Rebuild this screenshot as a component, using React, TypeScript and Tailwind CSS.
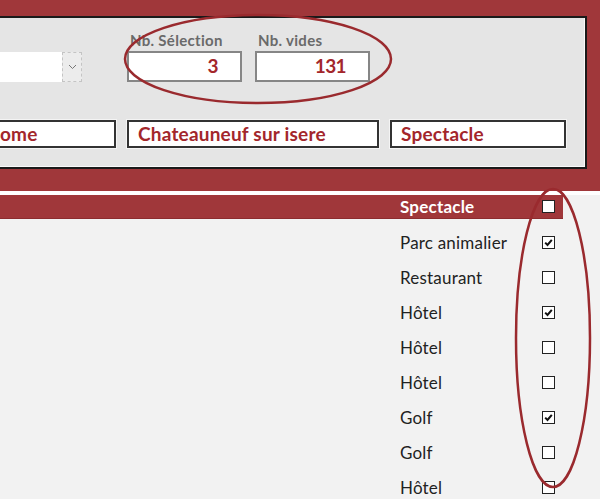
import React from "react";

const ROWS = [
  { label: "Parc animalier", checked: true },
  { label: "Restaurant", checked: false },
  { label: "Hôtel", checked: true },
  { label: "Hôtel", checked: false },
  { label: "Hôtel", checked: false },
  { label: "Golf", checked: true },
  { label: "Golf", checked: false },
  { label: "Hôtel", checked: false },
];

function Check({ checked }: { checked: boolean }) {
  return (
    <div className="w-[13px] h-[13px] shrink-0 border border-[#222] bg-white flex items-center justify-center">
      {checked && (
        <svg width="9" height="9" viewBox="0 0 9 9">
          <path d="M1.2 4.6 L3.5 7 L7.8 1.8" fill="none" stroke="#111" strokeWidth="2" />
        </svg>
      )}
    </div>
  );
}

function ValueBox({ label, value }: { label: string; value: string }) {
  return (
    <div className="flex flex-col w-[115px]">
      <span className="pl-[3px] text-[15px] leading-[16px] tracking-[0.3px] font-bold text-[#6a6a6a]">{label}</span>
      <div className="mt-[3px] h-[31px] bg-white border-2 border-[#868686] flex items-center justify-end pr-[22px] text-[19px] tracking-[-0.6px] font-bold text-[#a3262b]">
        {value}
      </div>
    </div>
  );
}

function TextBox({ text, className }: { text: string; className: string }) {
  return (
    <div
      className={
        "h-[28px] bg-white border-2 border-[#333] shadow-[0_0_0_1px_#f4f4f4] flex items-center text-[19px] tracking-[0.2px] font-bold text-[#a3262b] whitespace-nowrap overflow-hidden " +
        className
      }
    >
      {text}
    </div>
  );
}

export default function App() {
  return (
    <div
      className="relative w-[600px] h-[499px] overflow-hidden bg-[#f2f2f2]"
      style={{ fontFamily: "Lato, 'Open Sans', sans-serif" }}
    >
      {/* top band with the filter panel */}
      <div className="bg-[#a0373a] pt-4 pr-[13px] pb-[22px]">
        <div className="bg-[#e5e5e5] border-t-2 border-r-2 border-b-2 border-[#1a1a1a] shadow-[inset_-1px_-1px_0_#fafafa] pt-[14px] pb-[19px]">
          <div className="flex items-end">
            <div className="flex h-[30px] w-[82px]">
              <div className="flex-1 bg-white" />
              <div className="w-[20px] bg-[#ececec] border border-dashed border-[#c4c4c4] flex items-center justify-center">
                <svg width="9" height="6" viewBox="0 0 9 6">
                  <path d="M1 1 L4.5 4.5 L8 1" fill="none" stroke="#777" strokeWidth="1" />
                </svg>
              </div>
            </div>
            <div className="ml-[45px] flex gap-[13px]">
              <ValueBox label="Nb. Sélection" value="3" />
              <ValueBox label="Nb. vides" value="131" />
            </div>
          </div>
          <div className="mt-[38px] flex gap-[11px]">
            <TextBox text="ome" className="w-[116px] border-l-0" />
            <TextBox text="Chateauneuf sur isere" className="w-[252px] pl-[9px]" />
            <TextBox text="Spectacle" className="w-[176px] pl-[9px]" />
          </div>
        </div>
      </div>

      <div className="h-[4px] bg-white" />

      {/* list */}
      <div className="w-[563px] h-[24px] bg-[#a0373a] border-b border-[#8c2c2f] flex items-center">
        <span className="ml-[400px] w-[142px] text-[17px] tracking-[0.2px] font-bold text-white">Spectacle</span>
        <Check checked={false} />
      </div>
      <div className="mt-[6px] w-[563px] flex flex-col">
        {ROWS.map((r, i) => (
          <div key={i} className="h-[35px] flex items-center">
            <span className="ml-[400px] w-[142px] text-[17px] tracking-[0.2px] text-[#222]">{r.label}</span>
            <Check checked={r.checked} />
          </div>
        ))}
      </div>

      {/* annotation ellipses */}
      <svg className="absolute inset-0 pointer-events-none" width="600" height="499">
        <ellipse cx="258" cy="59" rx="133" ry="44" fill="none" stroke="#9a2a2e" strokeWidth="2.5" />
        <ellipse cx="553" cy="338" rx="37" ry="149" fill="none" stroke="#9a2a2e" strokeWidth="2.5" />
      </svg>
    </div>
  );
}
